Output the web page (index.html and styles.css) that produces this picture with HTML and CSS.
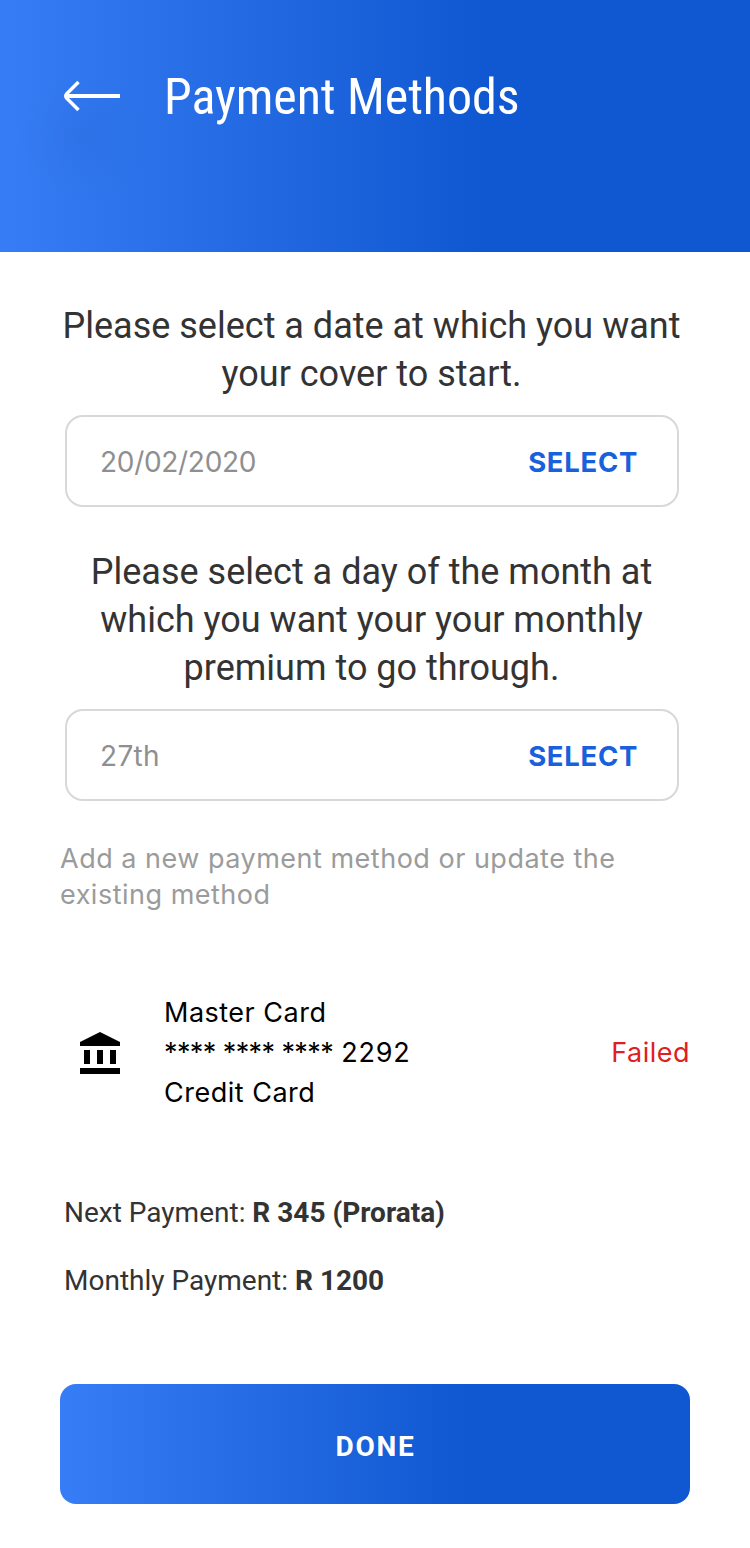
FILE: index.html
```html
<!DOCTYPE html>
<html lang="en">
<head>
<meta charset="utf-8">
<title>Payment Methods</title>
<link rel="stylesheet" href="styles.css">
</head>
<body>
<header class="header">
  <svg class="back" width="60" height="36" viewBox="0 0 60 36" fill="none" stroke="#fff" stroke-width="4" aria-label="Back"><path d="M60 18H6"/><path d="M18.500 4L7 15.500Q4.500 18 7 20.500L18.500 32" stroke-width="3.500"/></svg>
  <h1 class="title">Payment Methods</h1>
</header>
<main class="content">
  <p class="question">Please select a date at which you want<br>your cover to start.</p>
  <div class="field"><span class="value">20/02/2020</span><span class="select">SELECT</span></div>
  <p class="question second">Please select a day of the month at<br>which you want your your monthly<br>premium to go through.</p>
  <div class="field"><span class="value day">27th</span><span class="select">SELECT</span></div>
  <p class="hint">Add a new payment method or update the<br>existing method</p>
  <section class="card">
    <svg class="bank" width="40" height="42" viewBox="0 0 40 42"><path d="M0 10L20 0L40 10V14H0ZM4 18H10V32H4ZM17 18H23V32H17ZM30 18H36V32H30ZM0 36H40V42H0Z"/></svg>
    <div class="details"><div>Master Card</div><div><span class="mask">**** **** ****</span> <span class="digits">2292</span></div><div>Credit Card</div></div>
    <span class="status">Failed</span>
  </section>
  <p class="payment">Next Payment: <b>R 345 (Prorata)</b></p>
  <p class="payment">Monthly Payment: <b>R 1200</b></p>
  <button class="done">DONE</button>
</main>
</body>
</html>
```

FILE: styles.css
```css
* { box-sizing: border-box; }
body { margin: 0; background: #fff; font-family: Roboto, sans-serif; color: #333; }
.header { height: 252px; padding: 67px 62px 0 60px; display: flex; align-items: flex-start; background: radial-gradient(circle 68px at 85px 138px, rgba(30, 90, 180, .15), rgba(30, 90, 180, .06) 55%, transparent), linear-gradient(90deg, #377df5 0%, #1058d1 64%); color: #fff; }
.back { margin-top: 11px; flex: none; }
.title { margin: 0 0 0 44px; font: 400 50px/60px "Roboto Condensed", Roboto, sans-serif; letter-spacing: -.05px; white-space: nowrap; }
.content { padding: 50px 60px 0; }
.question { margin: 0; width: 623px; text-align: center; font-size: 36px; line-height: 48px; white-space: nowrap; }
.second { margin-top: 41px; }
.field { width: 614px; height: 92px; margin: 17px 0 0 5px; padding: 2px 39px 0 33px; border: 2px solid #d8d8d8; border-radius: 18px; display: flex; justify-content: space-between; align-items: center; font: 28px/36px Inter, sans-serif; }
.value { color: #8f8f8f; letter-spacing: -.3px; }
.day { letter-spacing: .3px; }
.select { color: #1961dc; font-weight: 700; font-size: 27.500px; letter-spacing: .7px; }
.hint { margin: 40px 0 0; color: #9b9b9b; font: 27px/36px Inter, sans-serif; letter-spacing: .5px; white-space: nowrap; }
.card { margin-top: 80px; display: flex; align-items: center; height: 120px; color: #000; font: 27px/40px Inter, sans-serif; letter-spacing: .5px; }
.bank { margin-left: 20px; }
.details { margin-left: 44px; white-space: nowrap; }
.mask { letter-spacing: -.6px; }
.digits { letter-spacing: .8px; }
.status { margin-left: auto; color: #e02020; }
.payment { margin: 32px 0 0 4px; font-size: 28px; line-height: 36px; white-space: nowrap; }
.card + .payment { margin-top: 82px; }
.done { display: block; width: 630px; height: 120px; margin-top: 85px; padding: 5px 0 0 1px; border: 0; border-radius: 16px; background: linear-gradient(90deg, #377df5 0%, #1058d1 64%); color: #fff; font: 700 28px/36px Roboto, sans-serif; letter-spacing: 1.700px; }
```
